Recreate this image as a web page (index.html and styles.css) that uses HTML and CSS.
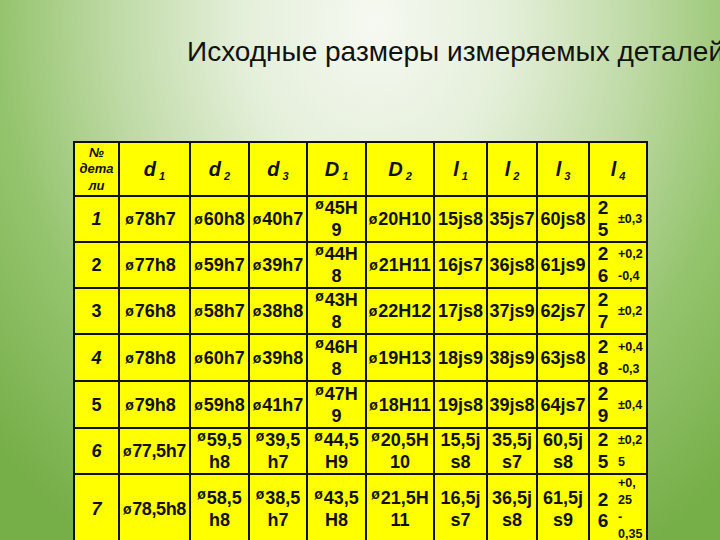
FILE: index.html
```html
<!DOCTYPE html>
<html lang="ru">
<head>
<meta charset="utf-8">
<title>Исходные размеры измеряемых деталей</title>
<link rel="stylesheet" href="styles.css">
</head>
<body>
<div class="slide">
  <h1 class="title">Исходные размеры измеряемых деталей</h1>
  <table class="grid">
    <colgroup>
      <col class="c-n"><col class="c-d1"><col class="c-d2"><col class="c-d3"><col class="c-D1">
      <col class="c-D2"><col class="c-l1"><col class="c-l2"><col class="c-l3"><col class="c-l4">
    </colgroup>
    <thead>
      <tr class="r-head">
        <th class="num-head">№<br>дета<br>ли</th>
        <th>d<sub>1</sub></th>
        <th>d<sub>2</sub></th>
        <th>d<sub>3</sub></th>
        <th>D<sub>1</sub></th>
        <th>D<sub>2</sub></th>
        <th>l<sub>1</sub></th>
        <th>l<sub>2</sub></th>
        <th>l<sub>3</sub></th>
        <th>l<sub>4</sub></th>
      </tr>
    </thead>
    <tbody>
      <tr class="r1">
        <td class="n it">1</td>
        <td class="d1"><span class="o">ø</span>78h7</td>
        <td><span class="o">ø</span>60h8</td>
        <td><span class="o">ø</span>40h7</td>
        <td><span class="o up">ø</span>45H<br>9</td>
        <td><span class="o">ø</span>20H10</td>
        <td>15js8</td>
        <td>35js7</td>
        <td>60js8</td>
        <td class="l4"><div class="l4-in"><div class="dig">2<br>5</div><div class="tol">±0,3</div></div></td>
      </tr>
      <tr class="r2">
        <td class="n">2</td>
        <td class="d1"><span class="o">ø</span>77h8</td>
        <td><span class="o">ø</span>59h7</td>
        <td><span class="o">ø</span>39h7</td>
        <td><span class="o up">ø</span>44H<br>8</td>
        <td><span class="o">ø</span>21H11</td>
        <td>16js7</td>
        <td>36js8</td>
        <td>61js9</td>
        <td class="l4"><div class="l4-in"><div class="dig">2<br>6</div><div class="tol">+0,2<br>-0,4</div></div></td>
      </tr>
      <tr class="r3">
        <td class="n">3</td>
        <td class="d1"><span class="o">ø</span>76h8</td>
        <td><span class="o">ø</span>58h7</td>
        <td><span class="o">ø</span>38h8</td>
        <td><span class="o up">ø</span>43H<br>8</td>
        <td><span class="o">ø</span>22H12</td>
        <td>17js8</td>
        <td>37js9</td>
        <td>62js7</td>
        <td class="l4"><div class="l4-in"><div class="dig">2<br>7</div><div class="tol">±0,2</div></div></td>
      </tr>
      <tr class="r4">
        <td class="n it">4</td>
        <td class="d1"><span class="o">ø</span>78h8</td>
        <td><span class="o">ø</span>60h7</td>
        <td><span class="o">ø</span>39h8</td>
        <td><span class="o up">ø</span>46H<br>8</td>
        <td><span class="o">ø</span>19H13</td>
        <td>18js9</td>
        <td>38js9</td>
        <td>63js8</td>
        <td class="l4"><div class="l4-in"><div class="dig">2<br>8</div><div class="tol">+0,4<br>-0,3</div></div></td>
      </tr>
      <tr class="r5">
        <td class="n">5</td>
        <td class="d1"><span class="o">ø</span>79h8</td>
        <td><span class="o">ø</span>59h8</td>
        <td><span class="o">ø</span>41h7</td>
        <td><span class="o up">ø</span>47H<br>9</td>
        <td><span class="o">ø</span>18H11</td>
        <td>19js8</td>
        <td>39js8</td>
        <td>64js7</td>
        <td class="l4"><div class="l4-in"><div class="dig">2<br>9</div><div class="tol">±0,4</div></div></td>
      </tr>
      <tr class="r6">
        <td class="n it">6</td>
        <td class="tight"><span class="o">ø</span>77,5h7</td>
        <td><span class="o up">ø</span>59,5<br>h8</td>
        <td><span class="o up">ø</span>39,5<br>h7</td>
        <td><span class="o up">ø</span>44,5<br>H9</td>
        <td><span class="o up">ø</span>20,5H<br>10</td>
        <td>15,5j<br>s8</td>
        <td>35,5j<br>s7</td>
        <td>60,5j<br>s8</td>
        <td class="l4"><div class="l4-in"><div class="dig">2<br>5</div><div class="tol">±0,2<br>5</div></div></td>
      </tr>
      <tr class="r7">
        <td class="n it">7</td>
        <td class="tight"><span class="o">ø</span>78,5h8</td>
        <td><span class="o up">ø</span>58,5<br>h8</td>
        <td><span class="o up">ø</span>38,5<br>h7</td>
        <td><span class="o up">ø</span>43,5<br>H8</td>
        <td><span class="o up">ø</span>21,5H<br>11</td>
        <td>16,5j<br>s7</td>
        <td>36,5j<br>s8</td>
        <td>61,5j<br>s9</td>
        <td class="l4"><div class="l4-in"><div class="dig dig7">2<br>6</div><div class="tol tol7">+0,<br>25<br>-<br>0,35</div></div></td>
      </tr>
    </tbody>
  </table>
</div>
</body>
</html>
```
FILE: styles.css
```css
html, body {
  margin: 0;
  padding: 0;
}
body {
  width: 720px;
  height: 540px;
  overflow: hidden;
}
.slide {
  width: 720px;
  height: 540px;
  overflow: hidden;
  background:
    radial-gradient(ellipse 72% 115% at 52% 4%, #f6f9f2 0%, #e4efd9 26%, #bfdaa6 50%, #95c46e 72%, #76ae48 100%);
}
.title {
  margin: 36px 0 0 187px;
  font-family: "Liberation Sans", Arial, sans-serif;
  font-weight: normal;
  font-size: 28px;
  line-height: 32px;
  color: #111;
  white-space: nowrap;
}
.grid {
  margin: 73px 0 0 73px;
  border-collapse: collapse;
  table-layout: fixed;
  width: 573px;
  font-family: "Liberation Sans", Arial, sans-serif;
  font-weight: bold;
  font-size: 18px;
  color: #111;
  background: #ffff00;
}
.c-n { width: 45px; }
.c-d1 { width: 71px; }
.c-d2 { width: 59px; }
.c-d3 { width: 58px; }
.c-D1 { width: 59px; }
.c-D2 { width: 68px; }
.c-l1 { width: 53px; }
.c-l2 { width: 50px; }
.c-l3 { width: 52px; }
.c-l4 { width: 58px; }
.grid th, .grid td {
  border: 2px solid #111;
  padding: 0;
  text-align: center;
  vertical-align: middle;
  line-height: 22px;
  white-space: nowrap;
  overflow: hidden;
}
.grid th {
  font-style: italic;
  font-size: 20px;
}
.grid th sub {
  font-size: 11px;
  vertical-align: -4px;
  line-height: 0;
  margin-left: 3px;
}
.grid th.num-head {
  font-size: 13px;
  line-height: 16.5px;
  padding-top: 1px;
}
.r-head { height: 54px; }
.r1 { height: 45px; }
.r2 { height: 46px; }
.r3 { height: 46px; }
.r4 { height: 47px; }
.r5 { height: 47px; }
.r6 { height: 46px; }
.r7 { height: 70px; }
.n { font-size: 18px; }
.it { font-style: italic; }
.d1 { padding-right: 8px !important; }
.tight { letter-spacing: -0.4px; }
.o {
  font-size: 14px;
  line-height: 0;
  vertical-align: 1px;
  margin-right: 1px;
}
.o.up {
  vertical-align: 5px;
}
.l4-in {
  display: flex;
  align-items: center;
  justify-content: flex-start;
}
.dig {
  width: 26px;
  text-align: center;
  font-size: 19px;
  line-height: 22px;
}
.tol {
  font-size: 12.5px;
  line-height: 22px;
  text-align: left;
  padding-left: 2px;
}
.dig7 {
  line-height: 21px;
  padding-top: 2px;
}
.tol7 {
  line-height: 17px;
}
```
